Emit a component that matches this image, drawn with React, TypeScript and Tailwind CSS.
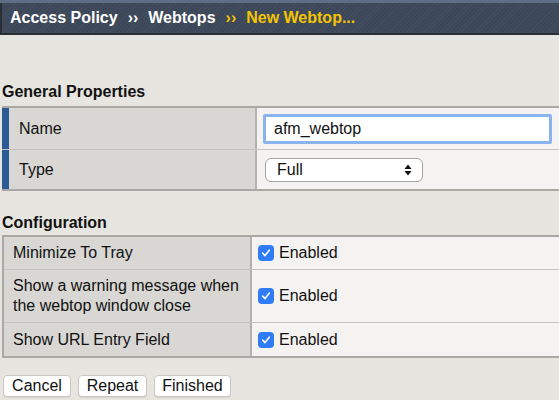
import React from "react";

const font = { fontFamily: '"Liberation Sans", Arial, Helvetica, sans-serif' };

function Check() {
  return (
    <span className="flex h-4 w-4 items-center justify-center rounded-[4px] bg-[#2f7cf6]">
      <svg width="10" height="10" viewBox="0 0 10 10" fill="none">
        <path d="M1.8 5.2 L4 7.6 L8.3 2.2" stroke="white" strokeWidth="1.6" strokeLinecap="round" strokeLinejoin="round" />
      </svg>
    </span>
  );
}

function Button({ label, w }: { label: string; w: string }) {
  return (
    <button className={`h-[22px] ${w} rounded-[4px] border border-[#c9c8c4] bg-white text-[16px] leading-none text-[#111] shadow-[0_1px_0_rgba(0,0,0,0.08)]`}>
      {label}
    </button>
  );
}

const configRows = [
  { label: ["Minimize To Tray"], h: "h-[33px]" },
  { label: ["Show a warning message when", "the webtop window close"], h: "h-[53px]" },
  { label: ["Show URL Entry Field"], h: "h-[33px]" },
];

export default function App() {
  return (
    <div className="h-[400px] w-[559px] overflow-hidden bg-[#e6e5e0] text-[#111]" style={font}>
      {/* HEADER */}
      <div className="h-[35px] border-t-[3px] border-t-[#5d6e86] bg-[#5d6e86]">
        <div className="flex h-[32px] items-center gap-[10px] border-b-2 border-l-2 border-[#2a2e35] bg-[#3c4859] bg-[repeating-linear-gradient(135deg,rgba(255,255,255,0.03)_0px,rgba(255,255,255,0.03)_1px,transparent_1px,transparent_3px)] pl-[8px] text-[16px] font-bold">
          <span className="text-white">Access Policy</span>
          <span className="text-white">››</span>
          <span className="text-white">Webtops</span>
          <span className="text-[#f5c400]">››</span>
          <span className="text-[#f5c400]">New Webtop...</span>
        </div>
      </div>

      {/* GENERAL PROPERTIES */}
      <h2 className="mt-[47px] pl-[2px] text-[16px] font-bold leading-[19px]">General Properties</h2>
      <div className="ml-[2px] mt-[5px] border-y-2 border-[#a9a8a4]">
        <div className="flex h-[42px] border-b border-[#c4c3bf]">
          <div className="flex w-[255px] items-center border-l-[7px] border-r-2 border-l-[#2b5a95] border-r-[#b3b2ae] bg-[#d8d7d3] pl-[10px] text-[16px]">
            Name
          </div>
          <div className="flex flex-1 items-center bg-[#f4f3f1] pl-[6px]">
            <div className="flex h-[30px] w-[289px] items-center rounded-[2px] border-[3px] border-[#8ab4f0] bg-white pl-[8px] text-[16px]">
              afm_webtop
            </div>
          </div>
        </div>
        <div className="flex h-[39px]">
          <div className="flex w-[255px] items-center border-l-[7px] border-r-2 border-l-[#2b5a95] border-r-[#b3b2ae] bg-[#d8d7d3] pl-[10px] text-[16px]">
            Type
          </div>
          <div className="flex flex-1 items-center bg-[#f4f3f1] pl-[8px]">
            <div className="flex h-[24px] w-[158px] items-center justify-between rounded-[6px] border border-[#a3a3a3] bg-white pl-[11px] pr-[10px] text-[16px]">
              <span>Full</span>
              <svg width="8" height="12" viewBox="0 0 8 12">
                <path d="M4 0.5 L7.5 5 L0.5 5 Z" fill="#111" />
                <path d="M4 11.5 L7.5 7 L0.5 7 Z" fill="#111" />
              </svg>
            </div>
          </div>
        </div>
      </div>

      {/* CONFIGURATION */}
      <h2 className="mt-[22px] pl-[2px] text-[16px] font-bold leading-[19px]">Configuration</h2>
      <div className="ml-[2px] mt-[3px] border-y-2 border-l-2 border-[#a9a8a4]">
        {configRows.map((r, i) => (
          <div key={i} className={`flex ${r.h} ${i < configRows.length - 1 ? "border-b border-[#c4c3bf]" : ""}`}>
            <div className="flex w-[248px] flex-col justify-center border-r-2 border-[#b3b2ae] bg-[#d8d7d3] pl-[9px] text-[16px] leading-[20px]">
              {r.label.map((l) => (
                <span key={l}>{l}</span>
              ))}
            </div>
            <div className="flex flex-1 items-center gap-[5px] bg-[#f4f3f1] pl-[6px] text-[16px]">
              <Check />
              <span>Enabled</span>
            </div>
          </div>
        ))}
      </div>

      {/* ACTIONS */}
      <div className="mt-[17px] flex gap-[7px] pl-[3px]">
        <Button label="Cancel" w="w-[68px]" />
        <Button label="Repeat" w="w-[69px]" />
        <Button label="Finished" w="w-[77px]" />
      </div>
    </div>
  );
}
